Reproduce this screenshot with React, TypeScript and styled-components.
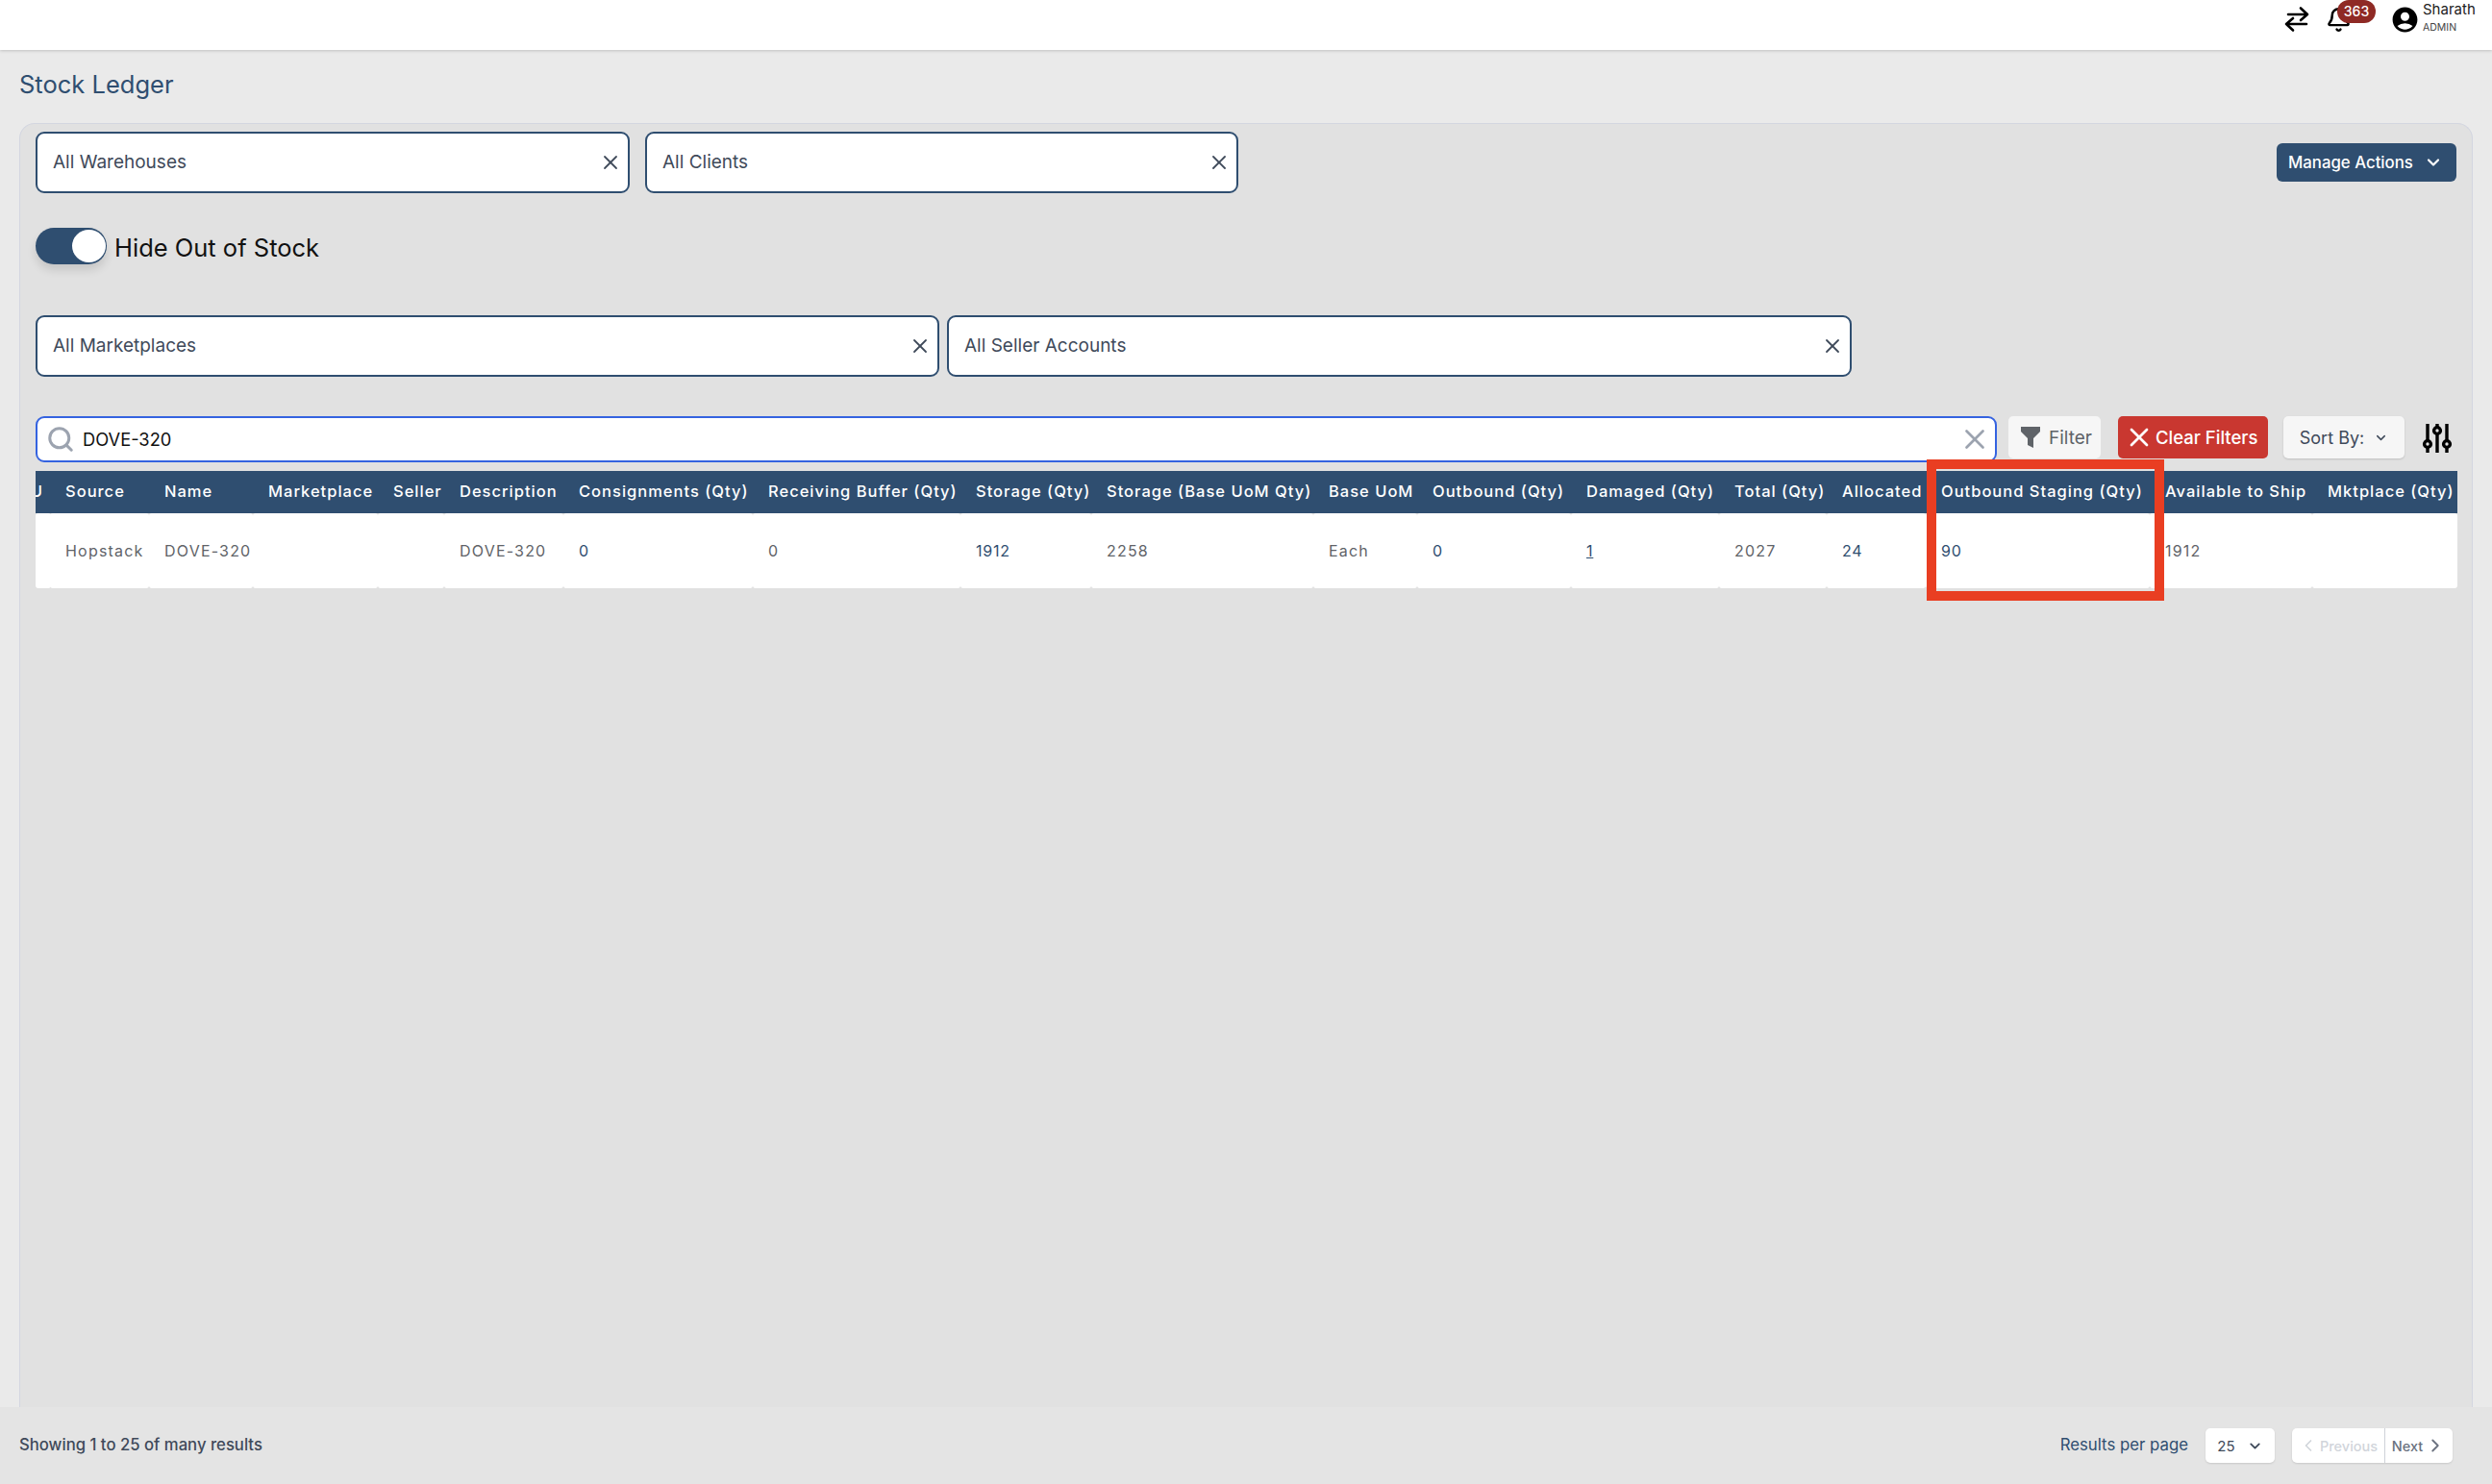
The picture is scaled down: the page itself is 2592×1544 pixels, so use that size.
import React from 'react'
import styled, { createGlobalStyle } from 'styled-components'
import { Bell, ChevronDown, ChevronLeft, ChevronRight, Search, X } from 'lucide-react'
import { MdAccountCircle } from 'react-icons/md'

type CellKind = 'plain' | 'link' | 'underline'

const columns: { label: string; value: string; kind: CellKind; width: number }[] = [
  { label: 'SKU', value: '', kind: 'plain', width: 15 },
  { label: 'Source', value: 'Hopstack', kind: 'plain', width: 103 },
  { label: 'Name', value: 'DOVE-320', kind: 'plain', width: 108 },
  { label: 'Marketplace', value: '', kind: 'plain', width: 130 },
  { label: 'Seller', value: '', kind: 'plain', width: 69 },
  { label: 'Description', value: 'DOVE-320', kind: 'plain', width: 124 },
  { label: 'Consignments (Qty)', value: '0', kind: 'link', width: 197 },
  { label: 'Receiving Buffer (Qty)', value: '0', kind: 'plain', width: 216 },
  { label: 'Storage (Qty)', value: '1912', kind: 'link', width: 136 },
  { label: 'Storage (Base UoM Qty)', value: '2258', kind: 'plain', width: 231 },
  { label: 'Base UoM', value: 'Each', kind: 'plain', width: 108 },
  { label: 'Outbound (Qty)', value: '0', kind: 'link', width: 160 },
  { label: 'Damaged (Qty)', value: '1', kind: 'underline', width: 154 },
  { label: 'Total (Qty)', value: '2027', kind: 'plain', width: 112 },
  { label: 'Allocated', value: '24', kind: 'link', width: 103 },
  { label: 'Outbound Staging (Qty)', value: '90', kind: 'link', width: 233 },
  { label: 'Available to Ship', value: '1912', kind: 'plain', width: 169 },
  { label: 'Mktplace (Qty)', value: '', kind: 'plain', width: 151 },
]

const gridTemplate = columns.map((c) => `${c.width}px`).join(' ')

const SwapIcon = () => (
  <svg width="26" height="28" viewBox="0 0 26 28" fill="none" stroke="#000" strokeWidth="2.6" strokeLinecap="round" strokeLinejoin="round">
    <path d="M4 9h20M17 2.5 24 9l-7 6" />
    <path d="M23 19H2M9 13l-7 6 7 6.5" />
  </svg>
)

const FunnelIcon = () => (
  <svg width="22" height="24" viewBox="0 0 22 24" fill="#5f6368">
    <path d="M1 1h20v5l-7 7v10l-6-3v-7L1 6z" />
  </svg>
)

const SlidersSvg = styled.svg`
  flex: 0 0 32px;
  margin-top: 7px;
`

const SlidersIcon = () => (
  <SlidersSvg width="32" height="32" viewBox="0 0 32 32" fill="none" stroke="#000" strokeWidth="3.4">
    <path d="M6 1v17M6 26v5M16 1v3M16 12v19M26 1v17M26 26v5" />
    <circle cx="6" cy="22" r="3.4" />
    <circle cx="16" cy="8" r="3.4" />
    <circle cx="26" cy="22" r="3.4" />
  </SlidersSvg>
)

export default function App() {
  return (
    <Page>
      <GlobalStyle />
      <TopBar>
        <SwapIcon />
        <BellWrap>
          <Bell size={27} strokeWidth={2.2} color="#000" />
          <Badge>363</Badge>
        </BellWrap>
        <MdAccountCircle size={31} color="#000" />
        <UserBlock>
          <UserName>Sharath</UserName>
          <UserRole>ADMIN</UserRole>
        </UserBlock>
      </TopBar>

      <Main>
        <Title>Stock Ledger</Title>
        <Panel>
          <FirstRow>
            <SelectBox $width={618}>
              All Warehouses
              <X size={24} strokeWidth={1.8} color="#3f4a5a" />
            </SelectBox>
            <SelectBox $width={617}>
              All Clients
              <X size={24} strokeWidth={1.8} color="#3f4a5a" />
            </SelectBox>
            <ManageButton>
              Manage Actions
              <ChevronDown size={20} strokeWidth={2.6} />
            </ManageButton>
          </FirstRow>

          <ToggleRow>
            <ToggleTrack>
              <ToggleKnob />
            </ToggleTrack>
            <ToggleLabel>Hide Out of Stock</ToggleLabel>
          </ToggleRow>

          <SecondRow>
            <SelectBox $width={940}>
              All Marketplaces
              <X size={24} strokeWidth={1.8} color="#3f4a5a" />
            </SelectBox>
            <SelectBox $width={941}>
              All Seller Accounts
              <X size={24} strokeWidth={1.8} color="#3f4a5a" />
            </SelectBox>
          </SecondRow>

          <SearchRow>
            <SearchBox>
              <Search size={30} strokeWidth={2.4} color="#9ca3af" />
              <SearchValue>DOVE-320</SearchValue>
              <X size={34} strokeWidth={1.9} color="#9ca3af" />
            </SearchBox>
            <FilterButton>
              <FunnelIcon />
              Filter
            </FilterButton>
            <ClearButton>
              <X size={32} strokeWidth={2} />
              Clear Filters
            </ClearButton>
            <SortButton>
              Sort By:
              <ChevronDown size={15} strokeWidth={2.4} />
            </SortButton>
            <SlidersIcon />
          </SearchRow>

          <TableWrap>
            <HeaderRow>
              {columns.map((c) => (
                <HeaderCell key={c.label} $clip={c.label === 'SKU'}>
                  {c.label}
                </HeaderCell>
              ))}
            </HeaderRow>
            <BodyRow>
              {columns.map((c) => (
                <BodyCell key={c.label} $kind={c.kind}>
                  {c.value}
                </BodyCell>
              ))}
            </BodyRow>
            <Highlight />
          </TableWrap>
        </Panel>
      </Main>

      <Footer>
        <ShowingText>Showing 1 to 25 of many results</ShowingText>
        <FooterRight>
          <PerPageLabel>Results per page</PerPageLabel>
          <PerPageSelect>
            25
            <ChevronDown size={17} strokeWidth={2.6} />
          </PerPageSelect>
          <Pager>
            <PagerButton $disabled>
              <ChevronLeft size={20} strokeWidth={2} />
              Previous
            </PagerButton>
            <PagerButton>
              Next
              <ChevronRight size={22} strokeWidth={2} />
            </PagerButton>
          </Pager>
        </FooterRight>
      </Footer>
    </Page>
  )
}

const GlobalStyle = createGlobalStyle`
  html, body {
    margin: 0;
    padding: 0;
    background: #eaeaea;
  }
  * {
    box-sizing: border-box;
  }
`

const Page = styled.div`
  display: flex;
  flex-direction: column;
  width: 2592px;
  height: 1544px;
  overflow: hidden;
  font-family: Inter, 'Noto Sans', sans-serif;
  background: #eaeaea;
`

const TopBar = styled.header`
  position: relative;
  z-index: 2;
  flex: 0 0 52px;
  display: flex;
  align-items: center;
  padding: 0 16px 12px 0;
  justify-content: flex-end;
  background: #fff;
  box-shadow: 0 1px 3px rgba(0, 0, 0, 0.18);
`

const BellWrap = styled.div`
  position: relative;
  display: flex;
  margin: 0 40px 0 17px;
`

const Badge = styled.span`
  position: absolute;
  top: -7px;
  left: 12px;
  width: 40px;
  height: 24px;
  border-radius: 12px;
  background: #8f2a25;
  color: #fff;
  font-size: 14px;
  font-weight: 500;
  line-height: 24px;
  text-align: center;
`

const UserBlock = styled.div`
  display: flex;
  flex-direction: column;
  align-self: flex-start;
  margin-left: 3px;
  width: 56px;
`

const UserName = styled.span`
  font-size: 15px;
  line-height: 20px;
  color: #222;
`

const UserRole = styled.span`
  font-size: 10.5px;
  line-height: 18px;
  color: #444;
`

const Main = styled.main`
  flex: 1;
  min-height: 0;
  display: flex;
  flex-direction: column;
  padding: 0 20px;
`

const Title = styled.h1`
  flex: 0 0 76px;
  margin: 0;
  padding-top: 21px;
  font-size: 25.5px;
  line-height: 30px;
  font-weight: 400;
  color: #2f4e70;
`

const Panel = styled.section`
  flex: 1;
  display: flex;
  flex-direction: column;
  padding: 8px 16px 0;
  background: #e1e1e1;
  border: 1px solid #d3d6e0;
  border-bottom: 0;
  border-radius: 16px 16px 0 0;
`

const FirstRow = styled.div`
  display: flex;
  align-items: flex-start;
  gap: 16px;
`

const SelectBox = styled.div<{ $width: number }>`
  flex: 0 0 ${(p) => p.$width}px;
  height: 64px;
  display: flex;
  align-items: center;
  justify-content: space-between;
  padding: 0 6px 1px 16px;
  background: #fff;
  border: 2px solid #2f4e70;
  border-radius: 9px;
  font-size: 19px;
  color: #3f4a5a;
`

const ManageButton = styled.button`
  margin: 12px 0 0 auto;
  width: 187px;
  height: 40px;
  display: flex;
  align-items: center;
  justify-content: space-between;
  padding: 0 14px 0 12px;
  border: 0;
  border-radius: 6px;
  background: #2f4e70;
  color: #fff;
  font-family: inherit;
  font-size: 16.8px;
  font-weight: 500;
`

const ToggleRow = styled.div`
  display: flex;
  align-items: center;
  gap: 8px;
  margin-top: 36px;
`

const ToggleTrack = styled.div`
  position: relative;
  width: 74px;
  height: 38px;
  border-radius: 19px;
  background: #2f4e70;
  box-shadow: 0 6px 10px rgba(0, 0, 0, 0.12);
`

const ToggleKnob = styled.div`
  position: absolute;
  top: 2px;
  right: 1px;
  width: 35px;
  height: 34px;
  border-radius: 50%;
  background: #fff;
`

const ToggleLabel = styled.span`
  margin-top: 2px;
  font-size: 25.5px;
  color: #111;
`

const SecondRow = styled.div`
  display: flex;
  gap: 8px;
  margin-top: 53px;
`

const SearchRow = styled.div`
  display: flex;
  align-items: flex-start;
  gap: 18px;
  margin-top: 41px;
  padding-right: 4px;
`

const SearchBox = styled.div`
  flex: 1;
  margin-right: -6px;
  height: 48px;
  display: flex;
  align-items: center;
  padding: 0 4px 0 9px;
  background: #fff;
  border: 2px solid #3563e0;
  border-radius: 9px;
`

const SearchValue = styled.span`
  flex: 1;
  margin-left: 8px;
  font-size: 18.3px;
  color: #111;
`

const ToolButton = styled.button`
  height: 44px;
  display: flex;
  align-items: center;
  border: 0;
  border-radius: 5px;
  font-family: inherit;
  font-size: 18px;
  padding: 0;
`

const FilterButton = styled(ToolButton)`
  width: 96px;
  padding-left: 12px;
  gap: 8px;
  background: #f6f6f6;
  color: #5f6368;
  font-size: 19px;
`

const ClearButton = styled(ToolButton)`
  width: 156px;
  margin-right: -2px;
  padding-left: 6px;
  gap: 1px;
  background: #c93730;
  color: #fff;
  font-weight: 500;
  font-size: 18.5px;
`

const SortButton = styled(ToolButton)`
  width: 126px;
  justify-content: center;
  gap: 10px;
  background: #f6f6f6;
  color: #3f4a5a;
  box-shadow: 0 1px 2px rgba(0, 0, 0, 0.15);
`

const TableWrap = styled.div`
  position: relative;
  width: 2519px;
  margin-top: 9px;
`

const HeaderRow = styled.div`
  display: grid;
  grid-template-columns: ${gridTemplate};
  height: 44px;
  background: #2f4e70;
`

const HeaderCell = styled.div<{ $clip?: boolean }>`
  display: flex;
  align-items: center;
  overflow: hidden;
  white-space: nowrap;
  color: #fff;
  font-size: 16.5px;
  font-weight: 500;
  letter-spacing: 1px;
  justify-content: ${(p) => (p.$clip ? 'flex-end' : 'flex-start')};
  padding: ${(p) => (p.$clip ? '0 7px 2px 0' : '0 0 2px 16px')};
`

const BodyRow = styled.div`
  display: grid;
  grid-template-columns: ${gridTemplate};
  height: 78px;
`

const BodyCell = styled.div<{ $kind: CellKind }>`
  display: flex;
  align-items: center;
  padding-left: 16px;
  background: #fff;
  border-radius: 3px;
  font-size: 16px;
  font-weight: 400;
  letter-spacing: ${(p) => (p.$kind === 'plain' ? 1.2 : 0.8)}px;
  color: ${(p) => (p.$kind === 'plain' ? '#5f6368' : '#2f4e70')};
  text-decoration: ${(p) => (p.$kind === 'underline' ? 'underline' : 'none')};
`

const Highlight = styled.div`
  position: absolute;
  top: -12px;
  left: 1967px;
  width: 247px;
  height: 147px;
  border: 10px solid #e93e22;
`

const Footer = styled.footer`
  position: relative;
  z-index: 1;
  flex: 0 0 80px;
  display: flex;
  align-items: center;
  justify-content: space-between;
  padding: 0 41px 0 20px;
  background: #e4e4e4;
`

const ShowingText = styled.span`
  padding-bottom: 2px;
  font-size: 16.7px;
  font-weight: 500;
  color: #3f4a5a;
`

const FooterRight = styled.div`
  display: flex;
  align-items: center;
`

const PerPageLabel = styled.span`
  padding-bottom: 2px;
  font-size: 16.8px;
  color: #2f4e70;
  margin-right: 18px;
`

const PerPageSelect = styled.div`
  width: 72px;
  height: 36px;
  display: flex;
  align-items: center;
  justify-content: center;
  gap: 12px;
  margin-right: 18px;
  background: #fff;
  border-radius: 5px;
  font-size: 15px;
  color: #3f4a5a;
  box-shadow: 0 1px 2px rgba(0, 0, 0, 0.12);
`

const Pager = styled.div`
  display: flex;
  height: 36px;
  background: #fff;
  border-radius: 5px;
  box-shadow: 0 1px 2px rgba(0, 0, 0, 0.12);
`

const PagerButton = styled.div<{ $disabled?: boolean }>`
  display: flex;
  align-items: center;
  justify-content: center;
  width: ${(p) => (p.$disabled ? 97 : 70)}px;
  font-size: 14.5px;
  font-weight: 500;
  gap: 2px;
  color: ${(p) => (p.$disabled ? '#d1d5db' : '#6b7280')};
  border-right: ${(p) => (p.$disabled ? '1px solid #cfd2d8' : '0')};
`
